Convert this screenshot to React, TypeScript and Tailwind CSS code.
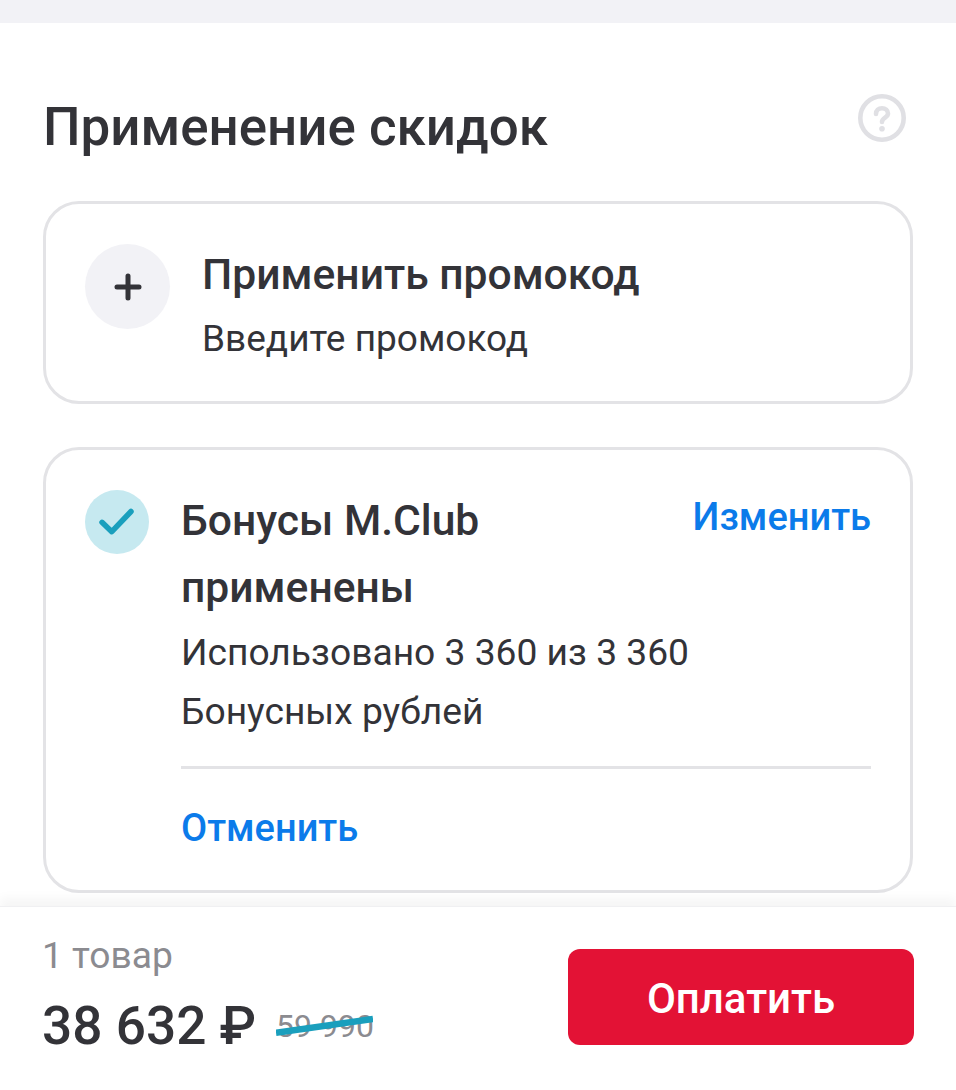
export default function App() {
  return (
    <div className="flex h-[1090px] w-[956px] flex-col overflow-hidden bg-white font-['Roboto',sans-serif] text-[#333338]">
      <div className="h-[23px] shrink-0 bg-[#f2f2f6]" />
      <main className="flex h-[883px] shrink-0 flex-col px-[43px]">
        <div className="flex h-[178px] shrink-0 items-start justify-between">
          <h1 className="mt-[70px] text-[52.9px] leading-[68px] font-medium">Применение скидок</h1>
          <svg className="mt-[71px] mr-[7px]" width="48" height="48" viewBox="0 0 48 48" fill="none">
            <circle cx="24" cy="24" r="21.7" stroke="#e0e0e4" strokeWidth="4.6" />
            <path d="M18 20c0-3.6 2.6-5.7 6-5.7s6 2.2 6 5.2c0 4.2-6 4-6 8.5" stroke="#e0e0e4" strokeWidth="4.6" strokeLinecap="round" />
            <circle cx="24" cy="34.8" r="2.8" fill="#e0e0e4" />
          </svg>
        </div>
        <section className="flex h-[203px] shrink-0 items-start rounded-[36px] border-[3px] border-[#e3e3e6] pt-[40px] pl-[39px]">
          <div className="flex h-[85px] w-[85px] shrink-0 items-center justify-center rounded-full bg-[#f2f2f6]">
            <svg width="28" height="28" viewBox="0 0 28 28" fill="none">
              <path d="M14 3v22M3 14h22" stroke="#333338" strokeWidth="5" strokeLinecap="round" />
            </svg>
          </div>
          <div className="ml-[32px]">
            <div className="mt-[4px] text-[42.6px] leading-[52px] font-medium">Применить промокод</div>
            <div className="mt-[15px] text-[37px] leading-[48px]">Введите промокод</div>
          </div>
        </section>
        <section className="mt-[43px] flex h-[446px] shrink-0 items-start rounded-[36px] border-[3px] border-[#e3e3e6] pt-[40px] pr-[39px] pl-[39px]">
          <div className="h-[64px] w-[64px] shrink-0 rounded-full bg-[#c6e9f0]">
            <svg width="64" height="64" viewBox="0 0 64 64" fill="none">
              <path d="M17 32.3l9.8 9.4L46 21.5" stroke="#1a9fbd" strokeWidth="5.5" strokeLinecap="round" strokeLinejoin="round" />
            </svg>
          </div>
          <div className="mt-[-3px] ml-[32px] flex min-w-0 flex-1 flex-col">
            <div className="flex items-start justify-between">
              <div className="text-[42.6px] leading-[67px] font-medium">
                Бонусы M.Club
                <br />
                применены
              </div>
              <div className="text-[38px] leading-[60px] font-medium text-[#0b7bea]">Изменить</div>
            </div>
            <div className="mt-[2px] text-[37.2px] leading-[59px]">
              Использовано 3 360 из 3 360
              <br />
              Бонусных рублей
            </div>
            <div className="mt-[25px] h-[3px] bg-[#e3e3e6]" />
            <div className="mt-[29px] text-[38px] leading-[60px] font-medium text-[#0b7bea]">Отменить</div>
          </div>
        </section>
      </main>
      <footer className="flex flex-1 items-start justify-between border-t border-[#f0f0f2] px-[42px] shadow-[0_-8px_10px_rgba(0,0,0,0.04)]">
        <div className="mt-[25px]">
          <div className="text-[37.2px] leading-[46px] text-[#8b8b90]">1 товар</div>
          <div className="mt-[18px] flex items-center">
            <span className="text-[53.2px] leading-[60px] font-medium">38 632 ₽</span>
            <span className="relative ml-[20px] text-[32px] leading-[44px] text-[#8b8b90]">
              59 990
              <svg className="absolute top-[10px] left-[0px]" width="97" height="24" viewBox="0 0 97 24" fill="none">
                <path d="M0 18.7L97 5" stroke="#1a9fbd" strokeWidth="6.5" />
              </svg>
            </span>
          </div>
        </div>
        <button className="mt-[42px] flex h-[96px] w-[346px] items-center justify-center rounded-[12px] bg-[#e31235] pt-[3px] text-[42px] font-medium text-white">
          Оплатить
        </button>
      </footer>
    </div>
  );
}
